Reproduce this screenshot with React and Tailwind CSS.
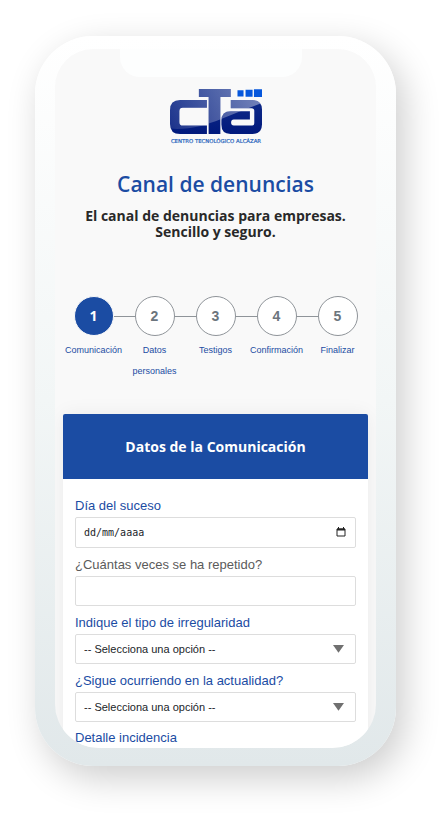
import React from 'react';

const steps = [
    { number: 1, label: 'Comunicación', active: true },
    { number: 2, label: 'Datos personales' },
    { number: 3, label: 'Testigos' },
    { number: 4, label: 'Confirmación' },
    { number: 5, label: 'Finalizar' },
];

const Logo = () => (
    <svg viewBox="0 0 274 164" className="w-[92px]" role="img" aria-label="Centro Tecnológico Alcázar">
        <defs>
            <linearGradient id="ink" x1="0" y1="0" x2="0" y2="1">
                <stop offset="0" stopColor="#15308c" />
                <stop offset="1" stopColor="#00197c" />
            </linearGradient>
            <linearGradient id="shine" x1="0" y1="0" x2="1" y2="0">
                <stop offset="0" stopColor="#fff" stopOpacity="0.1" />
                <stop offset="1" stopColor="#fff" stopOpacity="0.42" />
            </linearGradient>
            <clipPath id="letters">
                <path d="M110 33v23H38q-10 0-10 10v33q0 10 10 10h72v25H30Q0 134 0 104V63Q0 33 30 33z" />
                <path d="M86 0h95v24h-31v110h-35V24H86z" />
                <path d="M181 33h65q28 0 28 28v45q0 28-28 28h-66q-27 0-27-28v-12q0-28 28-28h57v25h-48q-8 0-8 9t8 9h55q6 0 6-7V65q0-8-8-8h-62z" />
            </clipPath>
        </defs>
        <g clipPath="url(#letters)">
            <rect width="274" height="134" fill="url(#ink)" />
            <path d="M0 0h274v42Q226 60 180 78Q140 96 92 110Q40 122 0 118z" fill="url(#shine)" />
        </g>
        <path d="M201 4h18v18h-18zM225 2h21v21h-21zM250 1h24v23h-24z" fill="#0657dc" />
        <text x="137" y="162" textAnchor="middle" fontSize="16" fill="#2a66bd" stroke="#2a66bd" strokeWidth="0.6" fontFamily="'DejaVu Sans', sans-serif">
            CENTRO TECNOLÓGICO ALCÁZAR
        </text>
    </svg>
);

const Step = ({ number, label, active }) => (
    <li className="group relative flex min-w-0 flex-1 flex-col items-center">
        <span className="absolute top-5 left-1/2 h-px w-full bg-[#8f9499] group-last:hidden" />
        <button
            type="button"
            className={
                active
                    ? 'relative size-10 rounded-full border border-[#f9f9f9] bg-[#1b4ca3] font-["Open_Sans",sans-serif] text-sm font-bold text-white'
                    : 'relative size-10 rounded-full border border-[#8f9499] bg-white text-sm font-bold text-[#6c757d]'
            }
        >
            {number}
        </button>
        <span className="mt-1 text-center text-[9px] leading-[21px] text-[#1b4ca3]">{label}</span>
    </li>
);

const controlClass = 'w-full rounded-xs border border-[#dddddd] bg-white px-2 text-[#212529]';
const labelClass = 'text-[13px] leading-[22px]';

const SelectField = ({ id, label }) => (
    <div className="flex flex-col">
        <label htmlFor={id} className={`${labelClass} text-[#1b4ca3]`}>{label}</label>
        <div className="relative">
            <select id={id} className={`${controlClass} block h-[30px] appearance-none text-[11px]`}>
                <option>-- Selecciona una opción --</option>
            </select>
            <svg viewBox="0 0 10 7" className="pointer-events-none absolute top-[11px] right-3 w-[11px]" aria-hidden="true">
                <path d="M0 0h10L5 7z" fill="#707070" />
            </svg>
        </div>
    </div>
);

export default function App() {
    return (
        <div className="min-h-screen bg-white pt-9 pr-[50px] pb-[50px] pl-[35px] font-['Liberation_Sans',sans-serif]">
            <div className="rounded-[58px] bg-linear-to-b from-white via-[#f2f6f6] to-[#e1e8ea] px-5 pt-[13px] pb-[18px] shadow-[8px_12px_36px_rgba(0,0,0,0.2)]">
                <main className="overflow-hidden rounded-t-[38px] rounded-b-[44px] bg-[#f9f9f9]">
                    <div className="flex justify-center pr-[10px]">
                        <div className="h-7 w-[182px] rounded-b-[20px] bg-[#fdfefe]" />
                    </div>

                    <header className="flex flex-col items-center pt-3 text-center font-['Open_Sans',sans-serif]">
                        <Logo />
                        <h1 className="mt-6 text-[21px] leading-8 font-semibold text-[#1b4ca3]">Canal de denuncias</h1>
                        <p className="mt-2 text-sm leading-4 font-bold text-[#292929]">
                            El canal de denuncias para empresas.
                            <br />
                            Sencillo y seguro.
                        </p>
                    </header>

                    <ol className="mt-14 flex px-2">
                        {steps.map((step) => (
                            <Step key={step.number} {...step} />
                        ))}
                    </ol>

                    <section className="mx-2 mt-8 rounded-xs bg-white shadow-[0_0_20px_rgba(0,0,0,0.06)]">
                        <h2 className="rounded-t-xs bg-[#1b4ca3] text-center font-['Open_Sans',sans-serif] text-sm leading-[65px] font-bold text-white">
                            Datos de la Comunicación
                        </h2>
                        <form className="flex flex-col gap-[6px] px-3 pt-4">
                            <div className="flex flex-col">
                                <label htmlFor="dia" className={`${labelClass} text-[#1b4ca3]`}>Día del suceso</label>
                                <div className="relative">
                                    <input
                                        id="dia"
                                        type="text"
                                        placeholder="dd/mm/aaaa"
                                        className={`${controlClass} block h-[31px] font-['DejaVu_Sans_Mono',monospace] text-[10px] placeholder:text-[#212529]`}
                                    />
                                    <button type="button" aria-label="Abrir calendario" className="absolute top-[10px] right-[10px]">
                                        <svg viewBox="0 0 10 10" className="w-[10px]" aria-hidden="true">
                                            <path d="M1 2h8v7H1z" fill="none" stroke="#222" />
                                            <path d="M1 1.5h8v2H1zM2 0h1v2H2zM7 0h1v2H7z" fill="#222" />
                                        </svg>
                                    </button>
                                </div>
                            </div>
                            <div className="flex flex-col">
                                <label htmlFor="veces" className={`${labelClass} text-[#5b5b5b]`}>¿Cuántas veces se ha repetido?</label>
                                <input id="veces" type="text" className={`${controlClass} h-[30px] text-[11px]`} />
                            </div>
                            <SelectField id="tipo" label="Indique el tipo de irregularidad" />
                            <SelectField id="actualidad" label="¿Sigue ocurriendo en la actualidad?" />
                            <span className="text-[13px] leading-5 text-[#1b4ca3]">Detalle incidencia</span>
                        </form>
                    </section>
                </main>
            </div>
        </div>
    );
}
